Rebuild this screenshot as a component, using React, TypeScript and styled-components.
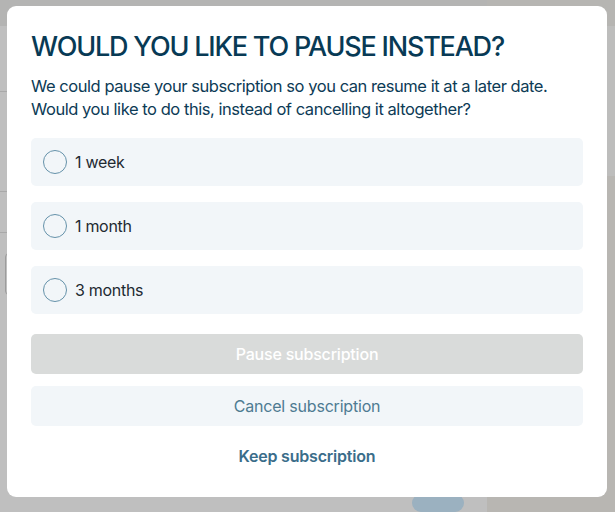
import { useState } from "react";
import styled, { createGlobalStyle } from "styled-components";

const GlobalStyle = createGlobalStyle`
  html, body {
    margin: 0;
    padding: 0;
    width: 615px;
    height: 512px;
    overflow: hidden;
    font-family: "Inter", "Noto Sans", sans-serif;
  }
  * { box-sizing: border-box; }
`;

// page behind the dialog, already dimmed
const Page = styled.div`
  width: 615px;
  height: 512px;
  display: grid;
  grid-template-columns: 487px 1fr;
  background: #bfbfbf;
`;

const MainCol = styled.div`
  display: flex;
  flex-direction: column;
`;

const TopStrip = styled.div`
  height: 26px;
  background: #b4b4b3;
`;

const BgRow = styled.div<{ $h: number }>`
  height: ${(p) => p.$h}px;
  border-bottom: 1px solid #a9a9a9;
`;

const BgInput = styled.div`
  margin: 20px 0 0 5px;
  width: 300px;
  height: 42px;
  border: 1px solid #9c9c9c;
  border-radius: 4px;
`;

const BgPill = styled.div`
  margin: auto 0 0 412px;
  width: 52px;
  height: 18px;
  border-radius: 9px;
  background: #9bb1c0;
`;

const SideCol = styled.div`
  display: flex;
  flex-direction: column;
  background: #b8b6b2;
`;

const SideTop = styled.div`
  height: 176px;
  background: #bdbdbc;
  border-top: 26px solid #b6b5b2;
`;

const Overlay = styled.div`
  position: fixed;
  inset: 0;
  padding: 6px 0 0 7px;
`;

const Modal = styled.div`
  width: 600px;
  height: 491px;
  background: #ffffff;
  border-radius: 9px;
  padding: 24px 24px 0 24px;
  display: flex;
  flex-direction: column;
`;

const Title = styled.h2`
  margin: 0;
  font-size: 27px;
  line-height: 34px;
  font-weight: 500;
  letter-spacing: -1.2px;
  color: #083a55;
`;

const Lead = styled.p`
  margin: 11px 0 0 0;
  font-size: 16.5px;
  line-height: 23px;
  font-weight: 400;
  letter-spacing: -0.45px;
  color: #0d3b56;
`;

const Options = styled.div`
  margin-top: 17px;
  display: flex;
  flex-direction: column;
  gap: 16px;
`;

const Option = styled.label`
  height: 48px;
  display: flex;
  align-items: center;
  gap: 8px;
  padding: 0 12px;
  background: #f2f6f9;
  border-radius: 5px;
  font-size: 16px;
  color: #1e2a32;
  letter-spacing: -0.3px;
  cursor: pointer;
`;

const Radio = styled.span<{ $on: boolean }>`
  width: 24px;
  height: 24px;
  border-radius: 50%;
  border: 1.5px solid #6592aa;
  background: ${(p) => (p.$on ? "radial-gradient(circle, #3d6f8b 0 5px, transparent 6px)" : "transparent")};
  flex-shrink: 0;
`;

const Actions = styled.div`
  margin-top: 20px;
  display: flex;
  flex-direction: column;
  gap: 12px;
`;

const Button = styled.button<{ $variant: "primary" | "secondary" | "link" }>`
  height: 40px;
  border: none;
  border-radius: 5px;
  font-family: inherit;
  font-size: 16px;
  letter-spacing: -0.2px;
  font-weight: ${(p) => (p.$variant === "link" ? 600 : p.$variant === "primary" ? 500 : 400)};
  background: ${(p) =>
    p.$variant === "primary" ? "#d9dbda" : p.$variant === "secondary" ? "#f2f6f9" : "transparent"};
  color: ${(p) =>
    p.$variant === "primary" ? "#ffffff" : p.$variant === "secondary" ? "#4e7b92" : "#3a6d8a"};
  margin-top: ${(p) => (p.$variant === "link" ? "-2px" : "0")};
  cursor: pointer;
`;

const choices = ["1 week", "1 month", "3 months"];

const App = () => {
  const [picked, setPicked] = useState<string | null>(null);

  return (
    <>
      <GlobalStyle />
      <Page>
        <MainCol>
          <TopStrip />
          <BgRow $h={66} />
          <BgRow $h={100} />
          <BgRow $h={41} />
          <BgInput />
          <BgPill />
        </MainCol>
        <SideCol>
          <SideTop />
        </SideCol>
      </Page>
      <Overlay>
        <Modal>
          <Title>WOULD YOU LIKE TO PAUSE INSTEAD?</Title>
          <Lead>
            We could pause your subscription so you can resume it at a later date.
            <br />
            Would you like to do this, instead of cancelling it altogether?
          </Lead>
          <Options>
            {choices.map((c) => (
              <Option key={c} onClick={() => setPicked(c)}>
                <Radio $on={picked === c} />
                {c}
              </Option>
            ))}
          </Options>
          <Actions>
            <Button $variant="primary" disabled={!picked}>
              Pause subscription
            </Button>
            <Button $variant="secondary">Cancel subscription</Button>
            <Button $variant="link">Keep subscription</Button>
          </Actions>
        </Modal>
      </Overlay>
    </>
  );
};

export default App;
